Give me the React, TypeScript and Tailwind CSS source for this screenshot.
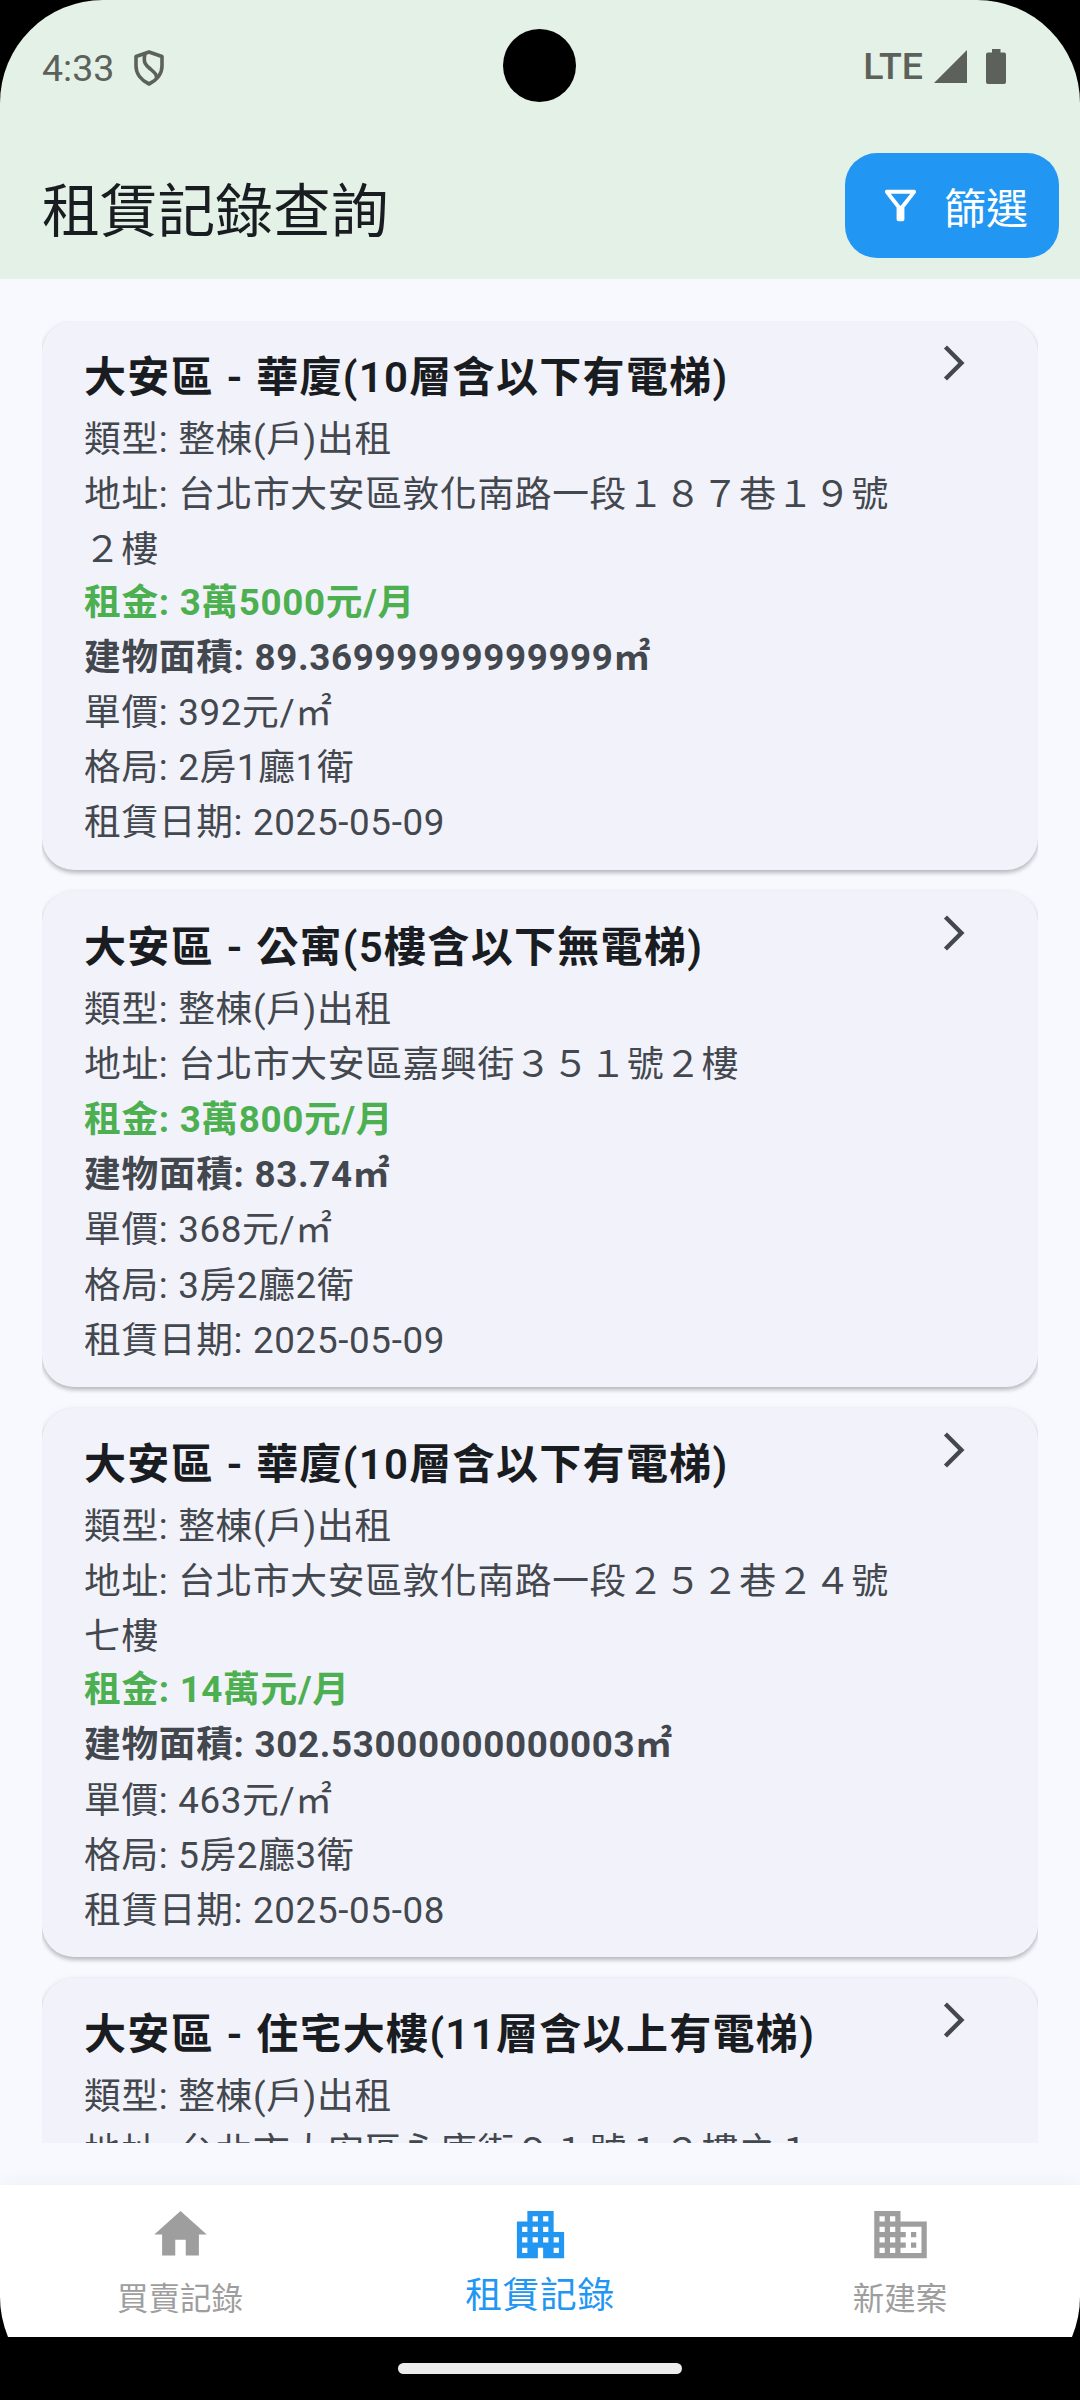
import { useState } from 'react';
import { MdApartment, MdArrowForwardIos, MdBusiness, MdHome, MdOutlineFilterAlt } from 'react-icons/md';
import clsx from 'clsx';

interface RentRecord {
  id: number;
  title: string;
  type: string;
  address: string[];
  rent?: string;
  area?: string;
  unitPrice?: string;
  layout?: string;
  date?: string;
}

const records: RentRecord[] = [
  {
    id: 1,
    title: '大安區 - 華廈(10層含以下有電梯)',
    type: '整棟(戶)出租',
    address: ['台北市大安區敦化南路一段１８７巷１９號', '２樓'],
    rent: '3萬5000元/月',
    area: '89.36999999999999㎡',
    unitPrice: '392元/㎡',
    layout: '2房1廳1衛',
    date: '2025-05-09',
  },
  {
    id: 2,
    title: '大安區 - 公寓(5樓含以下無電梯)',
    type: '整棟(戶)出租',
    address: ['台北市大安區嘉興街３５１號２樓'],
    rent: '3萬800元/月',
    area: '83.74㎡',
    unitPrice: '368元/㎡',
    layout: '3房2廳2衛',
    date: '2025-05-09',
  },
  {
    id: 3,
    title: '大安區 - 華廈(10層含以下有電梯)',
    type: '整棟(戶)出租',
    address: ['台北市大安區敦化南路一段２５２巷２４號', '七樓'],
    rent: '14萬元/月',
    area: '302.53000000000003㎡',
    unitPrice: '463元/㎡',
    layout: '5房2廳3衛',
    date: '2025-05-08',
  },
  {
    id: 4,
    title: '大安區 - 住宅大樓(11層含以上有電梯)',
    type: '整棟(戶)出租',
    address: ['台北市大安區永康街９１號１２樓之１'],
  },
];

const tabs = [
  { label: '買賣記錄', icon: MdHome },
  { label: '租賃記錄', icon: MdApartment },
  { label: '新建案', icon: MdBusiness },
];

function StatusBar() {
  return (
    <div className="relative flex h-[137px] items-start justify-between pl-[42px] pr-[74px] pt-[45px] text-[#5c615c]">
      <div className="flex items-center">
        <span className="w-[92px] text-[37.5px] leading-[46px]">4:33</span>
        <svg className="h-[36px] w-[30px]" viewBox="0 0 30 36" fill="none" stroke="currentColor" strokeWidth="3.6" strokeLinejoin="round">
          <path d="M15 2 L28 6.5 V16 C28 24 22.5 30.5 15 34 C7.5 30.5 2 24 2 16 V6.5 Z" />
          <path d="M11 4 C8.5 14 13 16 17 19.5 C22 24 23 25 22.5 29" />
        </svg>
      </div>
      <div className="flex items-start">
        <span className="mr-[11px] text-[37.5px] font-medium leading-[43px]">LTE</span>
        <svg className="mr-[19px] mt-[5px] h-[33px] w-[33px]" viewBox="0 0 33 33" fill="currentColor">
          <path d="M33 0V33H0z" />
        </svg>
        <svg className="mt-[4px] h-[35px] w-[20px]" viewBox="0 0 20 35" fill="currentColor">
          <path d="M6 0h8.5v3.500H18a2 2 0 0 1 2 2V33a2 2 0 0 1-2 2H2a2 2 0 0 1-2-2V5.500a2 2 0 0 1 2-2h4z" />
        </svg>
      </div>
      {/* Camera cutout */}
      <div className="absolute left-[503px] top-[29px] h-[73px] w-[73px] rounded-full bg-black" />
    </div>
  );
}

function RecordCard({ record }: { record: RentRecord }) {
  return (
    <article className="flex shrink-0 items-start justify-between rounded-[32px] bg-[#f2f2fa] pb-[19.5px] pl-[42px] pr-[63px] pt-[21px] shadow-[0_3px_4px_rgba(0,0,0,0.22),0_1px_6px_rgba(0,0,0,0.08)]">
      <div className="whitespace-nowrap text-[36.75px] leading-[55.1px] tracking-[0.656px] text-[#43474e]">
        <h2 className="h-[70px] pt-[1px] text-[42px] font-semibold leading-[69px] tracking-[1.313px] text-[#191c20] [word-spacing:1px]">
          {record.title}
        </h2>
        <p>類型: {record.type}</p>
        <p className={clsx(record.address.length > 1 && 'h-[108px]')}>
          地址: {record.address[0]}
          {record.address[1] && (
            <>
              <br />
              {record.address[1]}
            </>
          )}
        </p>
        {record.rent && <p className="font-bold text-[#4caf50]">租金: {record.rent}</p>}
        {record.area && <p className="font-bold">建物面積: {record.area}</p>}
        {record.unitPrice && <p>單價: {record.unitPrice}</p>}
        {record.layout && <p>格局: {record.layout}</p>}
        {record.date && <p>租賃日期: {record.date}</p>}
      </div>
      <MdArrowForwardIos className="size-[42px] text-[#43474e]" />
    </article>
  );
}

export default function App() {
  const [activeTab, setActiveTab] = useState(1);

  return (
    <div className="h-[2400px] w-[1080px] overflow-hidden bg-black font-[Roboto,'Noto_Sans_CJK_TC',sans-serif]">
      <div className="flex h-[2400px] flex-col overflow-hidden rounded-[103px]">
        <header className="h-[279px] shrink-0 bg-[#e4f1e6]">
          <StatusBar />
          <div className="flex h-[137px] items-center justify-between pl-[42px] pr-[21px]">
            <h1 className="pt-[12px] text-[57.75px] leading-[84px] text-[#191c20]">租賃記錄查詢</h1>
            <button className="flex h-[105px] w-[214px] items-center rounded-[32px] bg-[#2196f3] pl-[32px] text-white">
              <MdOutlineFilterAlt className="mr-[20px] size-[47px]" />
              <span className="pt-[9px] text-[42px] leading-[60px]">篩選</span>
            </button>
          </div>
        </header>

        <div className="h-[1906px] shrink-0 bg-[#f8f9ff] px-[42px] py-[42px]">
          <main className="flex h-[1822px] flex-col gap-[21px] overflow-hidden">
            {records.map((record) => (
              <RecordCard key={record.id} record={record} />
            ))}
          </main>
        </div>

        <nav className="flex h-[152px] shrink-0 bg-white shadow-[0_-4px_16px_rgba(0,0,0,0.03)]">
          {tabs.map(({ label, icon: Icon }, index) => (
            <button
              key={label}
              onClick={() => setActiveTab(index)}
              className={clsx(
                'flex flex-1 flex-col items-center pt-[18px]',
                activeTab === index ? 'text-[#2196f3]' : 'text-[#9e9e9e]'
              )}
            >
              <Icon className="size-[63px]" />
              <span
                className={clsx(
                  activeTab === index
                    ? 'mt-[3px] text-[36.75px] leading-[54px] tracking-[0.656px]'
                    : 'mt-[11px] text-[31.5px] leading-[46px]'
                )}
              >
                {label}
              </span>
            </button>
          ))}
        </nav>

        <div className="flex h-[63px] shrink-0 justify-center pt-[26px]">
          <div className="h-[11px] w-[284px] rounded-full bg-[#ececec]" />
        </div>
      </div>
    </div>
  );
}
